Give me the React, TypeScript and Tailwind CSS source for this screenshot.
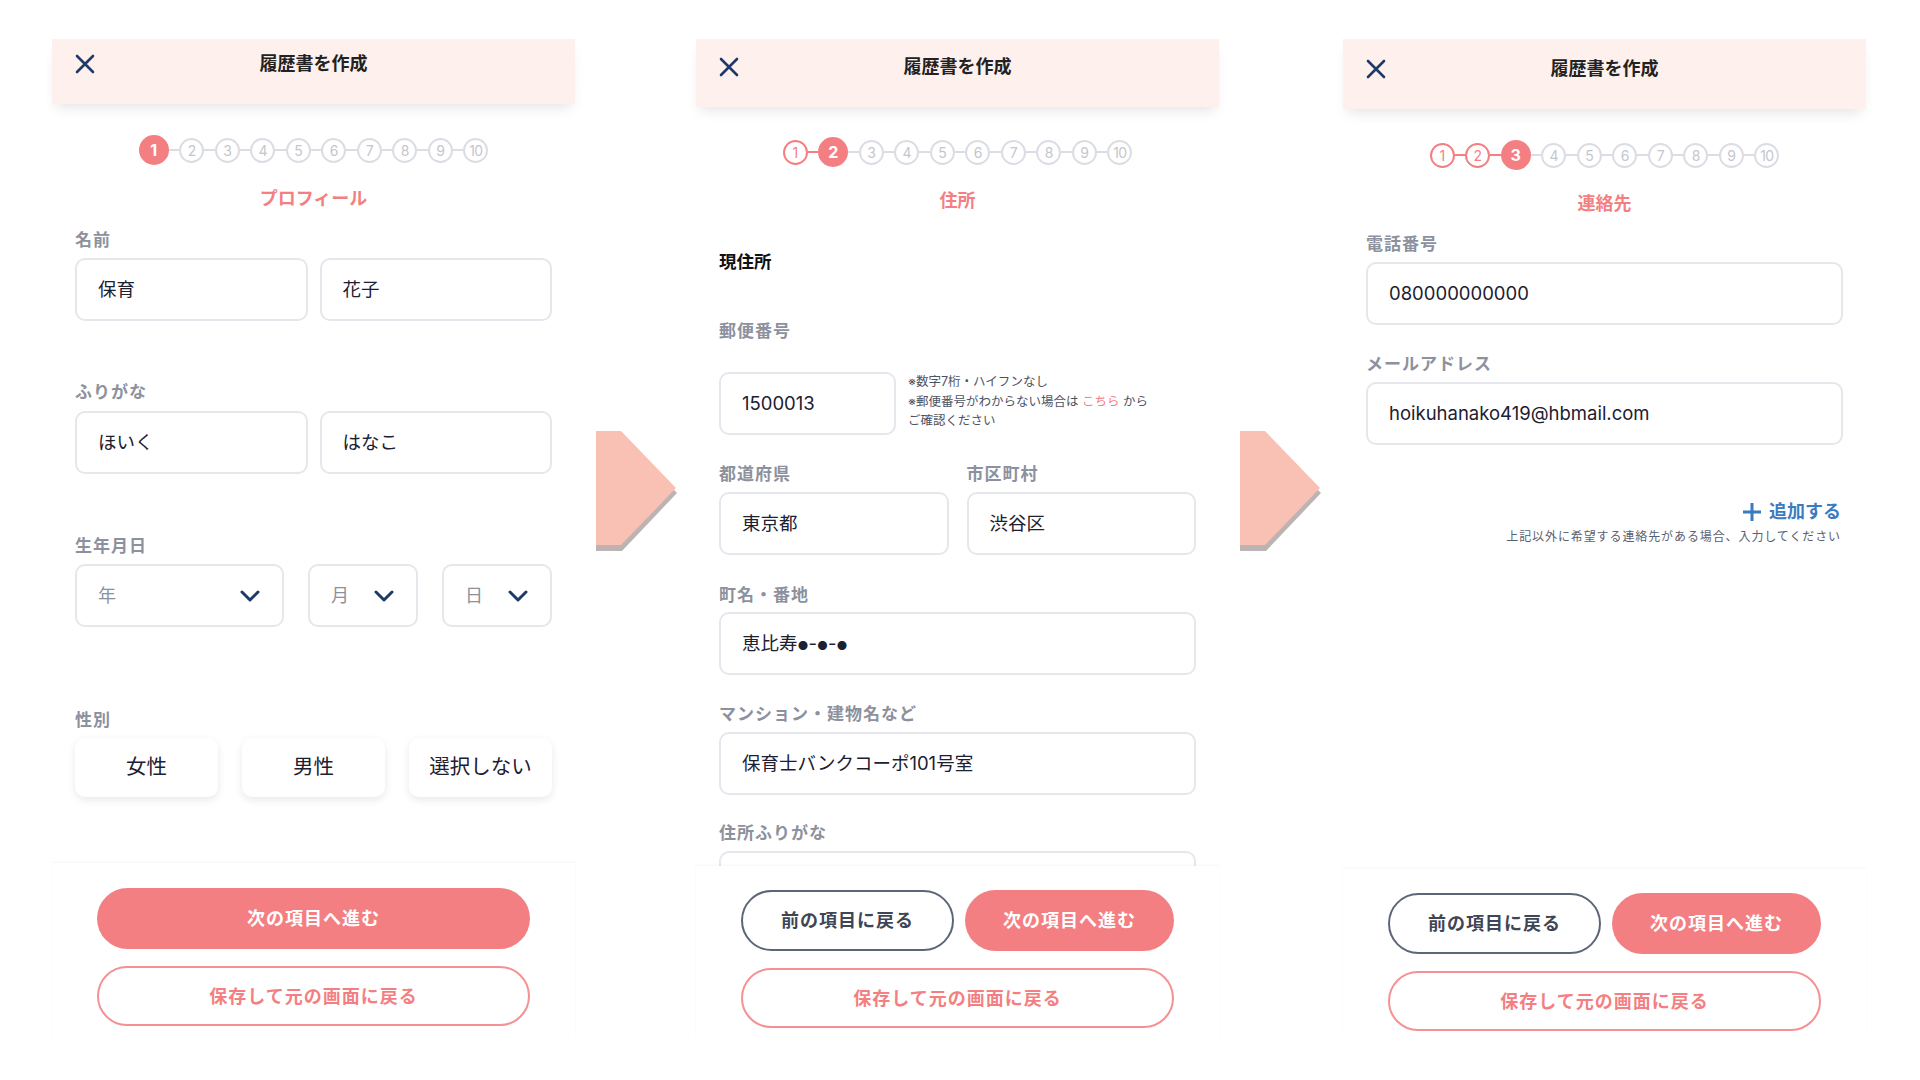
type StepsProps = { current: number; className: string };

function Steps({ current, className }: StepsProps) {
  const items = Array.from({ length: 10 }, (_, i) => i + 1);
  return (
    <div className={`flex items-center justify-center ${className}`}>
      {items.map((n) => (
        <div key={n} className="flex items-center">
          {n > 1 && (
            <span
              className={
                n <= current
                  ? "h-[2px] w-[10.5px] bg-[#f47f82]"
                  : "h-[2px] w-[10.5px] bg-[#dcdde4]"
              }
            />
          )}
          {n === current ? (
            <span className="flex h-[30px] w-[30px] items-center justify-center rounded-full bg-[#f47f82] text-[16px] font-bold text-white">
              {n}
            </span>
          ) : n < current ? (
            <span className="flex h-[25px] w-[25px] items-center justify-center rounded-full border-2 border-[#f47f82] text-[14px] text-[#f47f82]">
              {n}
            </span>
          ) : (
            <span className="flex h-[25px] w-[25px] items-center justify-center rounded-full border-2 border-[#dcdde4] text-[14px] tracking-tighter text-[#c4c6ce]">
              {n}
            </span>
          )}
        </div>
      ))}
    </div>
  );
}

function CloseIcon() {
  return (
    <svg width="20" height="20" viewBox="0 0 20 20" fill="none">
      <path
        d="M2 2L18 18M18 2L2 18"
        stroke="#1f3a68"
        strokeWidth="2.6"
        strokeLinecap="round"
      />
    </svg>
  );
}

function Chevron() {
  return (
    <svg width="20" height="12" viewBox="0 0 20 12" fill="none">
      <path
        d="M2 2L10 10L18 2"
        stroke="#1f3a68"
        strokeWidth="3"
        strokeLinecap="round"
        strokeLinejoin="round"
      />
    </svg>
  );
}

function Arrow() {
  return (
    <svg width="81" height="120" viewBox="0 0 81 120" className="mt-[392px] shrink-0">
      <polygon points="0,5 25,5 81,62 26,120 0,120" fill="#bdb3b2" />
      <polygon points="0,0 25,0 80,57 25,114 0,114" fill="#f9c1b4" />
    </svg>
  );
}

function Header({ pad }: { pad: string }) {
  return (
    <div
      className={`relative z-10 grid shrink-0 grid-cols-[40px_1fr_40px] items-start bg-[#fdf0ed] px-[23px] shadow-[0_8px_12px_-4px_rgba(0,0,0,0.10)] ${pad}`}
    >
      <div className="flex h-[20px] items-center">
        <CloseIcon />
      </div>
      <p className="text-center text-[18px] font-bold leading-[20px] text-[#222]">
        履歴書を作成
      </p>
      <div />
    </div>
  );
}

function Label({ children, className = "" }: { children: string; className?: string }) {
  return (
    <p className={`text-[17px] font-bold leading-6 tracking-[1px] text-[#8c919d] ${className}`}>
      {children}
    </p>
  );
}

function Field({ value, className = "" }: { value?: React.ReactNode; className?: string }) {
  return (
    <div
      className={`flex h-[63px] items-center rounded-[10px] border-2 border-[#e6e7ec] bg-white px-[21px] text-[18.5px] text-[#1c2030] ${className}`}
    >
      {value}
    </div>
  );
}

function Select({ label, className }: { label: string; className: string }) {
  return (
    <div
      className={`flex h-[63px] items-center justify-between rounded-[10px] border-2 border-[#e6e7ec] bg-white pl-[21px] pr-[22px] text-[18px] text-[#8c919d] ${className}`}
    >
      <span>{label}</span>
      <Chevron />
    </div>
  );
}

function NextButton({ className = "" }: { className?: string }) {
  return (
    <button className={`flex h-[61px] items-center justify-center rounded-full bg-[#f47f82] text-[18px] font-bold tracking-[1px] text-white ${className}`}>
      次の項目へ進む
    </button>
  );
}

function BackButton() {
  return (
    <button className="flex h-[61px] flex-1 items-center justify-center rounded-full border-2 border-[#5d6679] bg-white text-[18px] font-bold tracking-[1px] text-[#3e4656]">
      前の項目に戻る
    </button>
  );
}

function SaveButton({ className = "" }: { className?: string }) {
  return (
    <button className={`flex h-[60px] w-full items-center justify-center rounded-full border-2 border-[#f59193] bg-white text-[18px] font-bold tracking-[1px] text-[#f47f82] ${className}`}>
      保存して元の画面に戻る
    </button>
  );
}

function Footer({ h, pt, double }: { h: string; pt: string; double?: boolean }) {
  return (
    <div
      className={`shrink-0 bg-white px-[45px] shadow-[0_-1px_2px_rgba(0,0,0,0.04)] ${h} ${pt}`}
    >
      {double ? (
        <div className="flex gap-[11px]">
          <BackButton />
          <NextButton className="flex-1" />
        </div>
      ) : (
        <NextButton className="w-full" />
      )}
      <SaveButton className="mt-[17px]" />
    </div>
  );
}

function ProfilePanel() {
  return (
    <section className="flex h-[998px] w-[523px] shrink-0 flex-col bg-white">
      <Header pad="h-[65px] pt-[15px]" />
      <div className="flex-1 overflow-hidden px-[23px]">
        <Steps current={1} className="mt-[31px]" />
        <p className="mt-[21px] text-center text-[18px] font-bold leading-[26px] text-[#f47f82]">
          プロフィール
        </p>
        <Label className="mt-[16px]">名前</Label>
        <div className="mt-[6px] grid grid-cols-2 gap-3">
          <Field value="保育" />
          <Field value="花子" />
        </div>
        <Label className="mt-[59px]">ふりがな</Label>
        <div className="mt-[7px] grid grid-cols-2 gap-3">
          <Field value="ほいく" />
          <Field value="はなこ" />
        </div>
        <Label className="mt-[60px]">生年月日</Label>
        <div className="mt-[6px] flex justify-between">
          <Select label="年" className="w-[209px]" />
          <Select label="月" className="w-[110px]" />
          <Select label="日" className="w-[110px]" />
        </div>
        <Label className="mt-[81px]">性別</Label>
        <div className="mt-[6px] flex justify-between pb-4">
          {["女性", "男性", "選択しない"].map((g) => (
            <div
              key={g}
              className="flex h-[59px] w-[143px] items-center justify-center rounded-[10px] bg-white text-[20.5px] text-[#1c2030] shadow-[0_3px_8px_rgba(0,0,0,0.09)]"
            >
              {g}
            </div>
          ))}
        </div>
      </div>
      <Footer h="h-[174px]" pt="pt-[25px]" />
    </section>
  );
}

function AddressPanel() {
  return (
    <section className="flex h-[998px] w-[523px] shrink-0 flex-col bg-white">
      <Header pad="h-[68px] pt-[18px]" />
      <div className="flex-1 overflow-hidden px-[23px]">
        <Steps current={2} className="mt-[30px]" />
        <p className="mt-[21px] text-center text-[18px] font-bold leading-[26px] text-[#f47f82]">
          住所
        </p>
        <p className="mt-[36px] text-[17.5px] font-bold leading-6 text-[#111]">現住所</p>
        <Label className="mt-[45px]">郵便番号</Label>
        <div className="mt-[29px] flex items-start">
          <Field value="1500013" className="h-[62px] w-[177px]" />
          <div className="ml-[12px] text-[12.5px] leading-[19.5px] text-[#4c5262]">
            <p>※数字7桁・ハイフンなし</p>
            <p>
              ※郵便番号がわからない場合は <span className="text-[#f47f82]">こちら</span> から
            </p>
            <p>ご確認ください</p>
          </div>
        </div>
        <div className="mt-[27px] grid grid-cols-2 gap-[18px]">
          <div>
            <Label>都道府県</Label>
            <Field value="東京都" className="mt-[6px] h-[62px]" />
          </div>
          <div>
            <Label>市区町村</Label>
            <Field value="渋谷区" className="mt-[6px] h-[62px]" />
          </div>
        </div>
        <Label className="mt-[28px]">町名・番地</Label>
        <Field
          value={
            <span>
              恵比寿<span className="text-[12px]">●</span>-<span className="text-[12px]">●</span>-
              <span className="text-[12px]">●</span>
            </span>
          }
          className="mt-[5px]"
        />
        <Label className="mt-[27px]">マンション・建物名など</Label>
        <Field value="保育士バンクコーポ101号室" className="mt-[6px]" />
        <Label className="mt-[26px]">住所ふりがな</Label>
        <Field className="mt-[6px]" />
      </div>
      <Footer h="h-[171px]" pt="pt-[24px]" double />
    </section>
  );
}

function ContactPanel() {
  return (
    <section className="flex h-[998px] w-[523px] shrink-0 flex-col bg-white">
      <Header pad="h-[70px] pt-[20px]" />
      <div className="flex-1 overflow-hidden px-[23px]">
        <Steps current={3} className="mt-[31px]" />
        <p className="mt-[21px] text-center text-[18px] font-bold leading-[26px] text-[#f47f82]">
          連絡先
        </p>
        <Label className="mt-[15px]">電話番号</Label>
        <Field value="080000000000" className="mt-[6px]" />
        <Label className="mt-[27px]">メールアドレス</Label>
        <Field value="hoikuhanako419@hbmail.com" className="mt-[6px]" />
        <div className="mt-[54px] flex flex-col items-end pr-[2px]">
          <div className="flex items-center gap-[7px] text-[18px] font-bold leading-[26px] text-[#3b7cc0]">
            <svg width="20" height="20" viewBox="0 0 20 20" fill="none">
              <path d="M10 1V19M1 10H19" stroke="#3b7cc0" strokeWidth="3" />
            </svg>
            <span>追加する</span>
          </div>
          <p className="mt-[3px] text-[12px] leading-[18px] tracking-[0.9px] text-[#5a6070]">
            上記以外に希望する連絡先がある場合、入力してください
          </p>
        </div>
      </div>
      <Footer h="h-[168px]" pt="pt-[24px]" double />
    </section>
  );
}

export default function App() {
  return (
    <div className="flex h-[1080px] w-[1920px] items-start overflow-hidden bg-white pl-[52px] pt-[39px] font-[family-name:Inter,'Noto_Sans_CJK_JP',sans-serif]">
      <ProfilePanel />
      <div className="ml-[21px] mr-[19px] flex">
        <Arrow />
      </div>
      <AddressPanel />
      <div className="ml-[21px] mr-[22px] flex">
        <Arrow />
      </div>
      <ContactPanel />
    </div>
  );
}
